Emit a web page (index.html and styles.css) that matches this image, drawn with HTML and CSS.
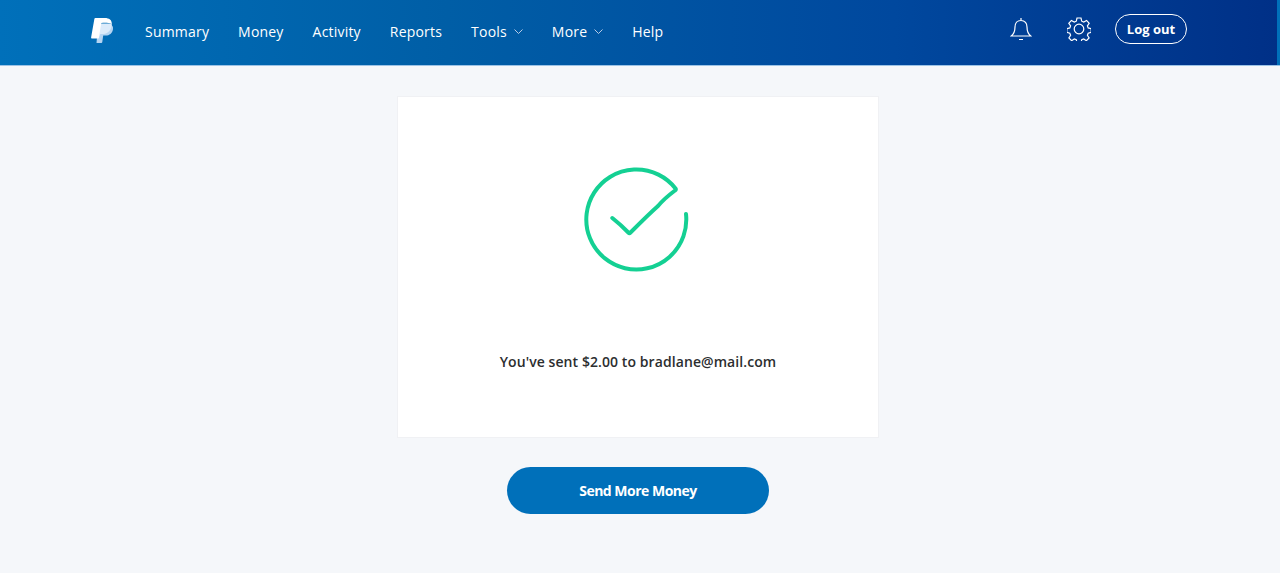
FILE: index.html
```html
<!DOCTYPE html>
<html lang="en">
<head>
    <meta charset="UTF-8">
    <meta name="viewport" content="width=device-width, initial-scale=1.0">
    <title>PayPal - Payment sent</title>
    <link rel="stylesheet" href="styles.css">
</head>
<body>
    <header class="topbar">
        <div class="topbar-main">
            <a class="logo" href="#">
                <svg width="23" height="25" viewBox="0 0 23 25">
                    <path fill="#b4d4f2" d="M7 6h10c3.500 0 5.500 2 5 5.200-.7 4-3.500 6.300-7.300 6.300h-2.500l-.9 6.500c-.1.600-.4 1-1 1H5.500z"/>
                    <path fill="#dcebfa" d="M7 5.500h13.800c.5 5-3.500 10.500-8.300 10.500H9.300L8 20H5z"/>
                    <path fill="#fff" d="M3.400.8C3.500.3 3.900 0 4.400 0h9.400c4.300 0 7.300 2 6.900 6-3-1.200-6.200-1.300-10.400-1L7.700 20.500H.8c-.5 0-.8-.4-.7-.9z"/>
                </svg>
            </a>
            <nav class="nav">
                <a href="#">Summary</a>
                <a href="#">Money</a>
                <a href="#">Activity</a>
                <a href="#">Reports</a>
                <a href="#">Tools
                    <svg class="chevron" width="9" height="5" viewBox="0 0 9 5"><path d="M.5.500l4 4 4-4"/></svg>
                </a>
                <a href="#">More
                    <svg class="chevron" width="9" height="5" viewBox="0 0 9 5"><path d="M.5.500l4 4 4-4"/></svg>
                </a>
                <a href="#">Help</a>
            </nav>
            <div class="actions">
                <svg class="icon" width="22" height="24" viewBox="0 0 22 24">
                    <path d="M11 1v2.500M11 3.500c-4 0-6 3-6 6.500 0 4-1.200 7-3.800 9h19.600c-2.600-2-3.800-5-3.800-9 0-3.500-2-6.500-6-6.500zM9 22.500h4"/>
                </svg>
                <svg class="icon" width="24" height="24" viewBox="0 0 24 24">
                    <circle cx="12" cy="12" r="4.800"/>
                    <path d="M10 1h4l.7 3.200 2 .9 2.900-1.700 2.600 2.900-1.800 2.600.8 2 3 .9v3.600l-3 .8-.8 2.100 1.700 2.700-2.700 2.700-2.700-1.700-2 .8-.7 3.100h-4l-.7-3.100-2-.8-2.700 1.700-2.700-2.700 1.700-2.700-.8-2.100-3-.8v-3.600l3-.9.800-2-1.800-2.600 2.600-2.900 2.900 1.700 2-.9z"/>
                </svg>
                <a class="logout" href="#">Log out</a>
            </div>
        </div>
    </header>

    <main class="content">
        <section class="card">
            <svg class="check" width="104" height="104" viewBox="0 0 104 104">
                <path d="M101 45A50 50 0 1 1 90.700 19.700C91 20.500 90.800 21 90 21.500 84 26 78 31 73 37 64 45 55 54 45.500 63.500 44.800 64.200 44 64.200 43.300 63.500 38 58 33 53.500 27.300 49"/>
            </svg>
            <p class="message">You've sent $2.00 to bradlane@mail.com</p>
        </section>
        <a class="send-more" href="#">Send More Money</a>
    </main>
</body>
</html>
```

FILE: styles.css
```css
html, body {
    margin: 0;
    height: 100%;
}
body {
    font-family: "Open Sans", Arial, sans-serif;
    background-color: #f5f7fa;
    overflow: hidden;
}
a {
    color: inherit;
    text-decoration: none;
}

.topbar {
    background-color: #0070ba;
    border-bottom: 1px solid #9cc3e6;
    padding-right: 3px;
}
.topbar-main {
    display: flex;
    align-items: center;
    height: 65px;
    padding: 0 90px 0 90px;
    color: #fff;
    background: linear-gradient(90deg, #0070ba 0%, #005ea6 35%, #00489e 70%, #003087 100%);
}
.logo {
    display: flex;
    margin: 0 31px 4px 1px;
}
.nav {
    display: flex;
    gap: 29px;
    margin-bottom: 2px;
    font-size: 14px;
    font-weight: 500;
    letter-spacing: .2px;
}
.nav a {
    display: flex;
    align-items: center;
    gap: 7px;
}
.chevron path {
    fill: none;
    stroke: #b7cbe6;
    stroke-width: 1;
}
.actions {
    display: flex;
    align-items: center;
    margin-left: auto;
    margin-bottom: 7px;
}
.icon {
    fill: none;
    stroke: #fff;
    stroke-width: 1.200;
}
.icon + .icon {
    margin: 0 24px 0 35px;
}
.logout {
    box-sizing: border-box;
    width: 72px;
    height: 30px;
    line-height: 28px;
    text-align: center;
    border: 1px solid #fff;
    border-radius: 15px;
    font-size: 13px;
    font-weight: 700;
}

.content {
    display: flex;
    flex-direction: column;
    align-items: center;
    padding: 30px 4px 0 0;
}
.card {
    box-sizing: border-box;
    display: flex;
    flex-direction: column;
    align-items: center;
    width: 482px;
    height: 342px;
    padding: 72px 0 0;
    background-color: #fff;
    border: 1px solid #f0f1f4;
}
.check {
    margin-left: -2px;
    overflow: visible;
}
.check path {
    fill: none;
    stroke: #14d093;
    stroke-width: 4;
    stroke-linecap: round;
    stroke-linejoin: round;
}
.message {
    margin: 79px 0 0;
    font-size: 14px;
    font-weight: 600;
    letter-spacing: .08px;
    color: #2c2e2f;
}
.send-more {
    width: 262px;
    height: 47px;
    margin-top: 29px;
    line-height: 47px;
    text-align: center;
    border-radius: 24px;
    background-color: #0070ba;
    color: #fff;
    font-size: 14px;
    font-weight: 700;
    letter-spacing: -.5px;
}
```
